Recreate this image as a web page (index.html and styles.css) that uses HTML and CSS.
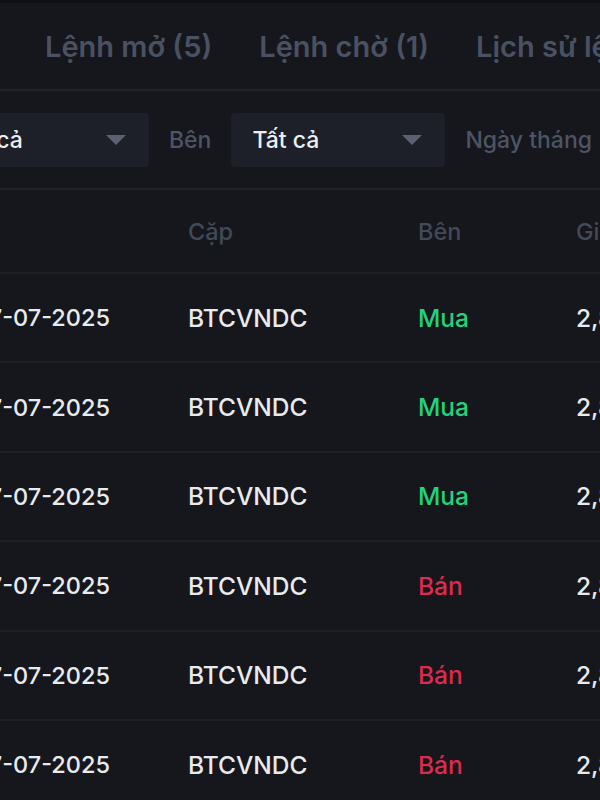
FILE: index.html
```html
<!DOCTYPE html>
<html lang="vi">
<head>
<meta charset="utf-8">
<title>Lịch sử lệnh</title>
<link rel="stylesheet" href="styles.css">
</head>
<body>
<div class="page">
  <nav class="tabs">
    <span class="tab">Lệnh mở (5)</span>
    <span class="tab">Lệnh chờ (1)</span>
    <span class="tab">Lịch sử lệnh</span>
  </nav>
  <div class="filters">
    <div class="select"><span class="select-text">Tất cả</span><span class="caret"></span></div>
    <span class="filter-label">Bên</span>
    <div class="select"><span class="select-text">Tất cả</span><span class="caret"></span></div>
    <span class="filter-label">Ngày tháng</span>
  </div>
  <div class="table">
    <div class="row head">
      <div class="cell c-date"></div>
      <div class="cell c-pair">Cặp</div>
      <div class="cell c-side">Bên</div>
      <div class="cell c-price">Giá</div>
    </div>
    <div class="row">
      <div class="cell c-date">17-07-2025</div>
      <div class="cell c-pair">BTCVNDC</div>
      <div class="cell c-side buy">Mua</div>
      <div class="cell c-price">2,874,000,000</div>
    </div>
    <div class="row">
      <div class="cell c-date">17-07-2025</div>
      <div class="cell c-pair">BTCVNDC</div>
      <div class="cell c-side buy">Mua</div>
      <div class="cell c-price">2,874,000,000</div>
    </div>
    <div class="row">
      <div class="cell c-date">17-07-2025</div>
      <div class="cell c-pair">BTCVNDC</div>
      <div class="cell c-side buy">Mua</div>
      <div class="cell c-price">2,874,000,000</div>
    </div>
    <div class="row">
      <div class="cell c-date">17-07-2025</div>
      <div class="cell c-pair">BTCVNDC</div>
      <div class="cell c-side sell">Bán</div>
      <div class="cell c-price">2,874,000,000</div>
    </div>
    <div class="row">
      <div class="cell c-date">17-07-2025</div>
      <div class="cell c-pair">BTCVNDC</div>
      <div class="cell c-side sell">Bán</div>
      <div class="cell c-price">2,874,000,000</div>
    </div>
    <div class="row">
      <div class="cell c-date">17-07-2025</div>
      <div class="cell c-pair">BTCVNDC</div>
      <div class="cell c-side sell">Bán</div>
      <div class="cell c-price">2,874,000,000</div>
    </div>
  </div>
</div>
</body>
</html>
```

FILE: styles.css
```css
html, body {
  margin: 0;
  padding: 0;
  background: #15171c;
  overflow: hidden;
}
body {
  width: 600px;
  height: 800px;
  font-family: Inter, "Noto Sans", sans-serif;
  color: #e8eaee;
}
.page {
  width: 1200px;
  border-top: 3px solid #0f1014;
}
.tabs {
  display: flex;
  align-items: center;
  gap: 47px;
  height: 86px;
  padding-left: 45px;
  border-bottom: 2px solid #1e222a;
}
.tab {
  font-size: 29px;
  font-weight: 600;
  color: #4a5162;
  white-space: nowrap;
}
.filters {
  display: flex;
  align-items: center;
  gap: 20px;
  height: 97px;
  margin-left: -65px;
  border-bottom: 2px solid #1e222a;
}
.select {
  display: flex;
  align-items: center;
  justify-content: space-between;
  width: 214px;
  height: 54px;
  box-sizing: border-box;
  padding: 0 23px 0 21px;
  background: #1d2028;
  border-radius: 4px;
}
.select-text {
  font-size: 23px;
  font-weight: 500;
  color: #eceef1;
}
.caret {
  width: 0;
  height: 0;
  border-left: 10px solid transparent;
  border-right: 10px solid transparent;
  border-top: 10px solid #5b6170;
}
.filter-label {
  font-size: 23px;
  font-weight: 500;
  color: #4d5465;
  white-space: nowrap;
}
.table {
  margin-left: -21px;
}
.row {
  display: flex;
  align-items: center;
  height: 87.4px;
  border-bottom: 2px solid #1c2028;
}
.row.head {
  height: 82px;
}
.cell {
  font-size: 24.5px;
  font-weight: 500;
  white-space: nowrap;
  overflow: hidden;
}
.head .cell {
  color: #434957;
  font-weight: 500;
  font-size: 23.5px;
}
.c-date { width: 209px; font-size: 23.5px; }
.c-pair { width: 230px; }
.c-side { width: 158px; }
.c-price { width: 300px; }
.buy { color: #22d27d; }
.sell { color: #de2a4f; }
```
